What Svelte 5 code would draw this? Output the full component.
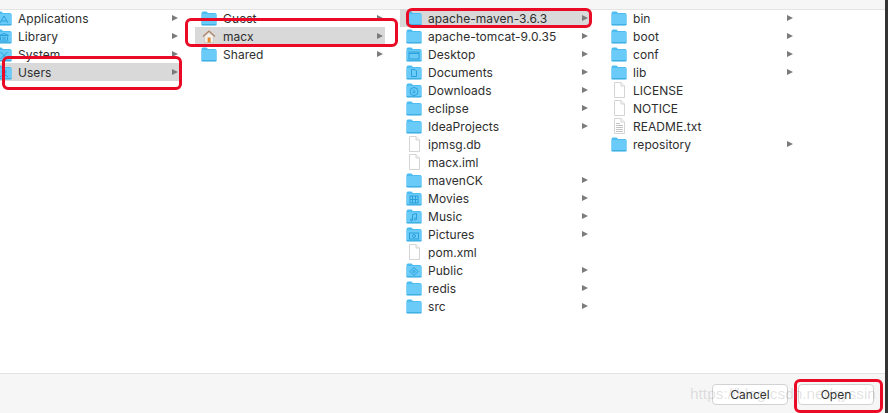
<script>
  const columns = [
    [
      { n: 'Applications', t: 'apps', a: 1 },
      { n: 'Library', t: 'lib', a: 1 },
      { n: 'System', t: 'sys', a: 1 },
      { n: 'Users', t: 'user', a: 1, s: 1 }
    ],
    [
      { n: 'Guest', t: 'folder', a: 1 },
      { n: 'macx', t: 'home', a: 1, s: 1 },
      { n: 'Shared', t: 'folder', a: 1 }
    ],
    [
      { n: 'apache-maven-3.6.3', t: 'folder', a: 1, s: 1 },
      { n: 'apache-tomcat-9.0.35', t: 'folder', a: 1 },
      { n: 'Desktop', t: 'desktop', a: 1 },
      { n: 'Documents', t: 'docs', a: 1 },
      { n: 'Downloads', t: 'down', a: 1 },
      { n: 'eclipse', t: 'folder', a: 1 },
      { n: 'IdeaProjects', t: 'folder', a: 1 },
      { n: 'ipmsg.db', t: 'file' },
      { n: 'macx.iml', t: 'file' },
      { n: 'mavenCK', t: 'folder', a: 1 },
      { n: 'Movies', t: 'movies', a: 1 },
      { n: 'Music', t: 'music', a: 1 },
      { n: 'Pictures', t: 'pics', a: 1 },
      { n: 'pom.xml', t: 'file' },
      { n: 'Public', t: 'public', a: 1 },
      { n: 'redis', t: 'folder', a: 1 },
      { n: 'src', t: 'folder', a: 1 }
    ],
    [
      { n: 'bin', t: 'folder', a: 1 },
      { n: 'boot', t: 'folder', a: 1 },
      { n: 'conf', t: 'folder', a: 1 },
      { n: 'lib', t: 'folder', a: 1 },
      { n: 'LICENSE', t: 'file' },
      { n: 'NOTICE', t: 'file' },
      { n: 'README.txt', t: 'text' },
      { n: 'repository', t: 'folder', a: 1 }
    ]
  ];
</script>

{#snippet icon(t)}
  <svg class="icon" viewBox="0 0 16 16" width="16" height="16" aria-hidden="true">
    {#if t === 'file' || t === 'text'}
      <path d="M3.5 .5H10L13.5 4V15.5H3.5Z" fill="#fff" stroke="#d4d4d4" />
      <path d="M10 .5V4H13.5" fill="#f4f4f4" stroke="#d4d4d4" />
      {#if t === 'text'}
        <path d="M5 5.5H9M5 7.5H12M5 9.5H12M5 11.5H12M5 13.5H12" stroke="#c4c4c4" />
      {/if}
    {:else if t === 'home'}
      <path d="M3.5 8.5V14.5H12.5V8.5L8 4.5Z" fill="#f4f2ef" stroke="#c2bcb4" stroke-width=".6" />
      <path d="M2 8.5 8 3 14 8.5" fill="none" stroke="#b08467" stroke-width="1.2" />
      <rect x="6.6" y="9.5" width="3" height="5" fill="#e08a35" />
    {:else}
      <path d="M0.5 3.5Q0.5 1.5 2 1.5H5.5L7 3H14Q15.5 3 15.5 4.5V14Q15.5 15.5 14 15.5H2Q0.5 15.5 0.5 14Z" fill="#4dbcf0" />
      <rect x="0.5" y="4" width="15" height="10.6" rx="1" fill="#6acbf9" />
      <rect x="0.5" y="14.2" width="15" height="1" fill="#3eabe0" />
      <g fill="none" stroke="#2a9fd8" stroke-width="1">
        {#if t === 'desktop'}
          <rect x="3" y="6" width="10" height="7" /><path d="M3 7.5H13" />
        {:else if t === 'docs'}
          <path d="M5.5 5.5H9L10.5 7V12.5H5.5Z" />
        {:else if t === 'down'}
          <circle cx="8" cy="9.5" r="4" /><path d="M8 7.5V11M6.5 9.8 8 11.2 9.5 9.8" />
        {:else if t === 'movies'}
          <rect x="4" y="6" width="8" height="7" /><path d="M6.5 6V13M9.5 6V13M4 9.5H12" />
        {:else if t === 'music'}
          <path d="M6.5 12V6.5L10.5 5.5V11" /><circle cx="5.5" cy="12" r="1" /><circle cx="9.5" cy="11" r="1" />
        {:else if t === 'pics'}
          <rect x="3.5" y="7" width="9" height="6" /><circle cx="8" cy="10" r="1.5" />
        {:else if t === 'public'}
          <path d="M8 5.5 12 9.5 8 13.5 4 9.5Z" /><circle cx="8" cy="9.5" r="1" />
        {:else if t === 'apps'}
          <path d="M4 13 8 6 12 13M5.5 11H10.5" />
        {:else if t === 'lib'}
          <path d="M3.5 7.5 8 5.5 12.5 7.5ZM4.5 8.5V12M7 8.5V12M9 8.5V12M11.5 8.5V12M3.5 13H12.5" />
        {:else if t === 'sys'}
          <path d="M4.5 6 11.5 13M11.5 6 4.5 13" />
        {:else if t === 'user'}
          <circle cx="8" cy="8" r="2" /><path d="M4 13Q8 9 12 13" />
        {/if}
      </g>
    {/if}
  </svg>
{/snippet}

<div class="window">
  <div class="topbar"></div>
  <div class="browser">
    {#each columns as col}
      <div class="col">
        {#each col as item}
          <div class="row" class:sel={item.s}>
            {@render icon(item.t)}
            <span class="name">{item.n}</span>
            {#if item.a}<span class="arrow"></span>{/if}
          </div>
        {/each}
      </div>
    {/each}
  </div>
  <div class="footer">
    <button class="btn">Cancel</button>
    <button class="btn">Open</button>
  </div>

  <div class="mark m-users"></div>
  <div class="mark m-macx"></div>
  <div class="mark m-maven"></div>
  <div class="mark m-open"></div>
  <div class="watermark">https://blog.csdn.net/qyssin</div>
  <div class="edge"></div>
</div>

<style>
  :global(body) {
    margin: 0;
    background: #fff;
    overflow: hidden;
  }
  .window {
    position: relative;
    width: 888px;
    height: 413px;
    display: flex;
    flex-direction: column;
    overflow: hidden;
    font-family: Inter, "Liberation Sans", sans-serif;
    font-size: 12px;
    letter-spacing: .05px;
    color: #2e2e2e;
  }
  .topbar {
    height: 9px;
    background: #f6f6f6;
    border-bottom: 1px solid #e4e4e4;
    flex: none;
  }
  .browser {
    flex: 1;
    display: flex;
    margin: -1px 0 0 -15px;
  }
  .col {
    width: 205px;
    flex: none;
  }
  .row {
    height: 18px;
    margin: 0 10px 0 5px;
    padding: 0 2px 0 6px;
    display: flex;
    align-items: center;
  }
  .row.sel {
    background: #d9d9d9;
  }
  .icon {
    flex: none;
    margin-right: 6px;
  }
  .name {
    flex: 1;
    white-space: nowrap;
  }
  .arrow {
    flex: none;
    width: 0;
    height: 0;
    border-left: 6px solid #7b7b7b;
    border-top: 3.5px solid transparent;
    border-bottom: 3.5px solid transparent;
  }
  .footer {
    flex: none;
    box-sizing: border-box;
    height: 40px;
    background: #f6f6f6;
    border-top: 1px solid #e4e4e4;
    display: flex;
    justify-content: flex-end;
    align-items: center;
    gap: 10px;
    padding: 1px 14px 0 0;
  }
  .btn {
    width: 76px;
    height: 21px;
    padding: 0;
    background: #fff;
    border: 1px solid #d2d2d2;
    border-radius: 4px;
    font: inherit;
    color: #2e2e2e;
  }
  .mark {
    position: absolute;
    border: 3px solid #ea0a26;
    border-radius: 6px;
    box-sizing: border-box;
  }
  .m-users { left: 2px; top: 56px; width: 180px; height: 34px; }
  .m-macx { left: 185px; top: 18px; width: 213px; height: 29px; }
  .m-maven { left: 406px; top: 8px; width: 186px; height: 20px; }
  .m-open { left: 794px; top: 379px; width: 89px; height: 34px; }
  .watermark {
    position: absolute;
    left: 690px;
    top: 385px;
    font: 15.3px "Liberation Sans", sans-serif;
    color: rgba(120, 120, 120, .22);
    white-space: nowrap;
  }
  .edge {
    position: absolute;
    right: 0;
    top: 0;
    bottom: 0;
    width: 3px;
    background: #333;
  }
</style>
